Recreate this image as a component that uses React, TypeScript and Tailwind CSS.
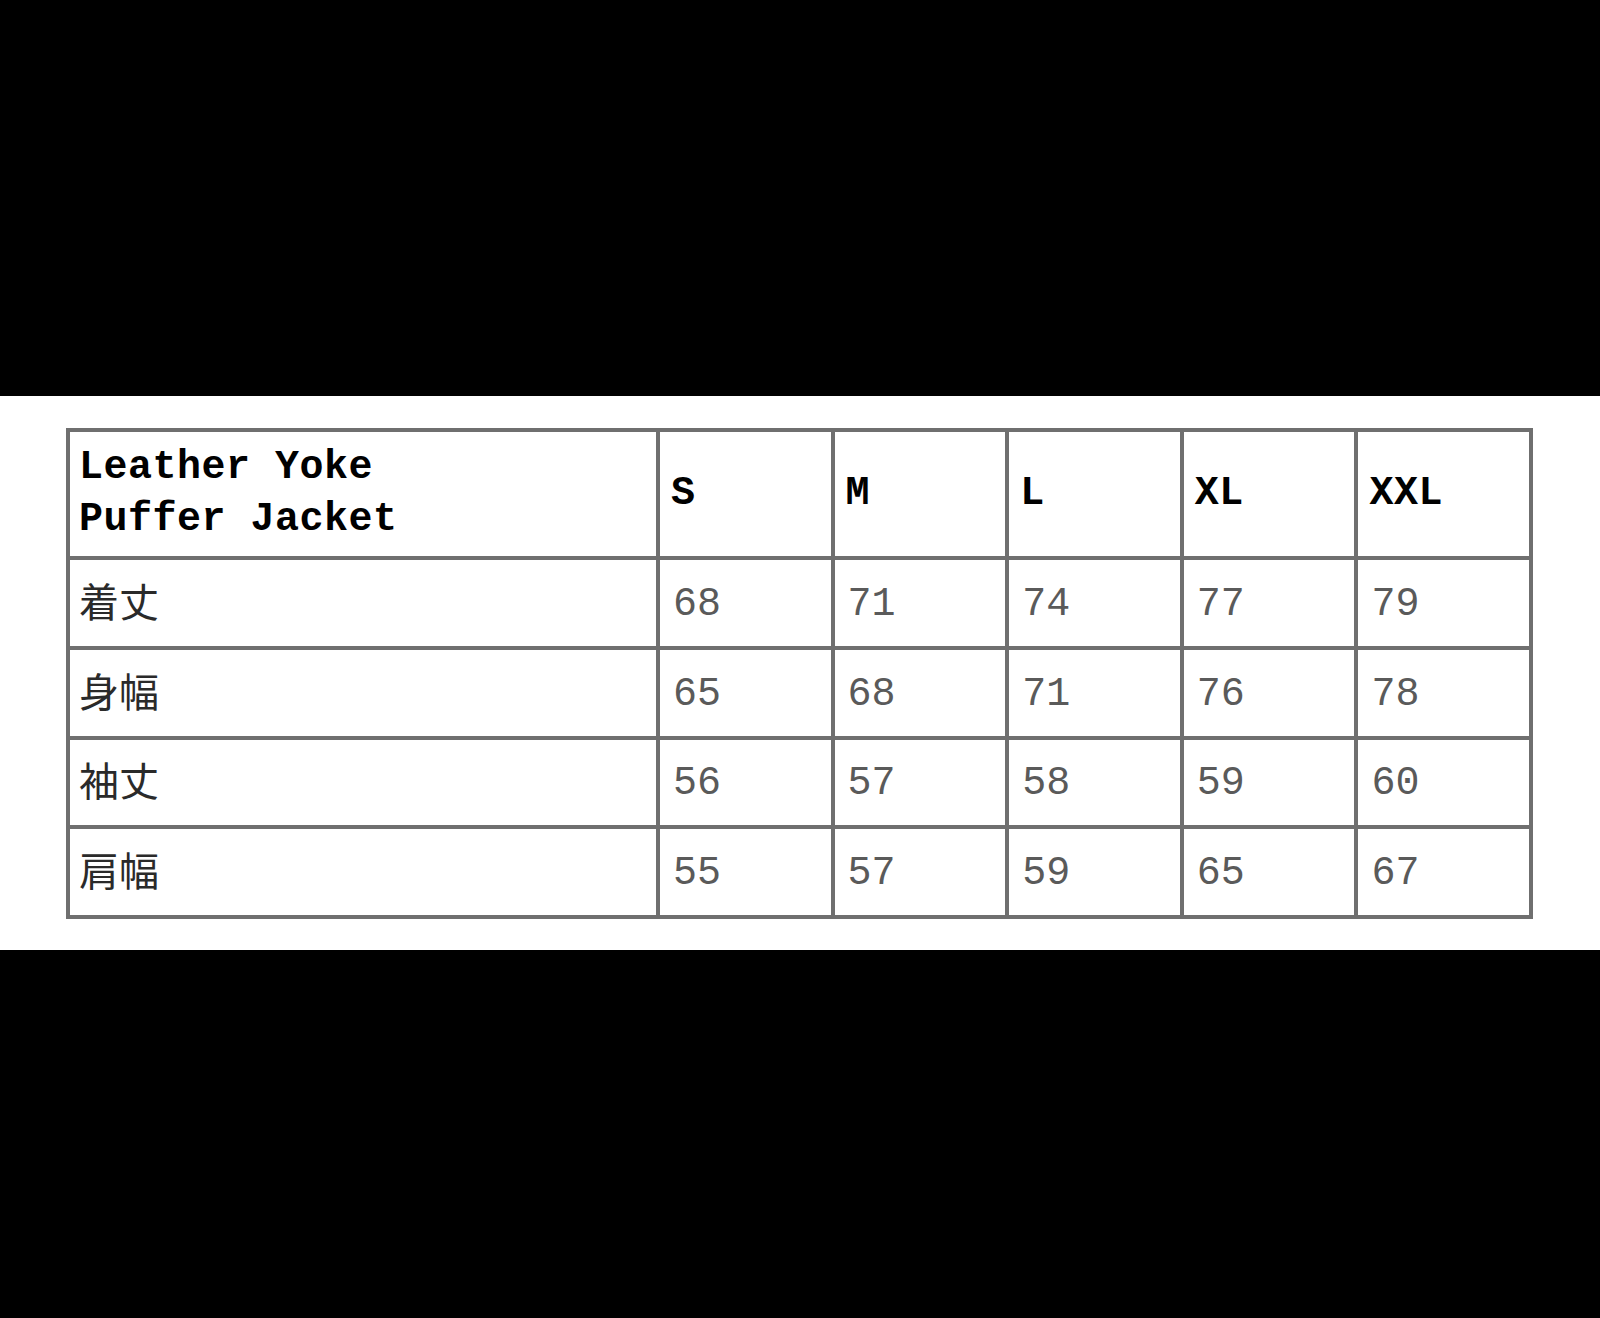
import React from 'react';

const SIZES = ['S', 'M', 'L', 'XL', 'XXL'];

const ROWS: Array<{ label: string; values: number[] }> = [
  { label: '着丈', values: [68, 71, 74, 77, 79] },
  { label: '身幅', values: [65, 68, 71, 76, 78] },
  { label: '袖丈', values: [56, 57, 58, 59, 60] },
  { label: '肩幅', values: [55, 57, 59, 65, 67] },
];

const mono = "font-['Liberation_Mono','Courier_New',monospace]";

export default function App() {
  return (
    <div className="w-[1600px] h-[1318px] bg-black flex flex-col">
      <div className="h-[396px] shrink-0" />

      <div className="h-[554px] shrink-0 bg-white pl-[66px] pt-[32px]">
        <div className="w-[1467px] h-[491px] grid grid-cols-[586px_1fr_1fr_1fr_1fr_1fr] grid-rows-[124px_1fr_1fr_1fr_1fr] gap-[4px] p-[4px] bg-[#6f6f6f]">
          <div className={`bg-white flex flex-col justify-center pl-[9px] ${mono} font-bold text-[40px] leading-[52px] tracking-[0.5px] text-black`}>
            <span>Leather Yoke</span>
            <span>Puffer Jacket</span>
          </div>
          {SIZES.map((s) => (
            <div key={s} className={`bg-white flex items-center pl-[11px] ${mono} font-bold text-[40px] tracking-[0.5px] text-black`}>
              {s}
            </div>
          ))}

          {ROWS.map((row) => (
            <React.Fragment key={row.label}>
              <div className="bg-white flex items-center pl-[9px] pb-[6px] font-['Noto_Sans_CJK_JP',sans-serif] text-[40px] text-[#2a2a2a]">
                {row.label}
              </div>
              {row.values.map((v, i) => (
                <div key={i} className={`bg-white flex items-center pl-[13px] pt-[4px] ${mono} text-[40px] text-[#5a5a5a]`}>
                  {v}
                </div>
              ))}
            </React.Fragment>
          ))}
        </div>
      </div>

      <div className="flex-1" />
    </div>
  );
}
